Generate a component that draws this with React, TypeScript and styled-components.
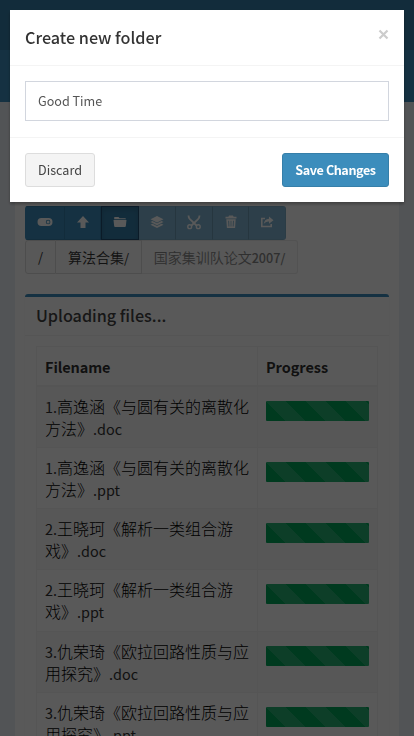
import React from "react";
import styled, { createGlobalStyle, css } from "styled-components";

const Global = createGlobalStyle`
  *, *::before, *::after { box-sizing: border-box; }
  html, body { margin: 0; height: 736px; overflow: hidden; background: #ecf0f5; }
  body { font-family: "Noto Sans CJK SC", "Liberation Sans", sans-serif; color: #333; font-size: 14px; }
`;

const Page = styled.div`
  height: 736px;
  overflow: hidden;
  display: flex;
  flex-direction: column;
`;
const LogoBar = styled.header`
  flex: 0 0 50px;
  background: #367fa9;
`;
const NavBar = styled.nav`
  flex: 0 0 52px;
  background: #3c8dbc;
`;
const Content = styled.main`
  flex: 1;
  min-height: 0;
  padding: 0 15px;
`;
const Panel = styled.section`
  height: 100%;
  padding: 104px 10px 0;
  background: #fff;
`;
const Toolbar = styled.div`
  display: flex;
  height: 34px;
  width: 261px;
  border-radius: 3px;
  overflow: hidden;
`;
const Tool = styled.button<{ $w: number; $active?: boolean; $disabled?: boolean }>`
  width: ${(p) => p.$w}px;
  flex: none;
  padding: 0 0 2px;
  display: flex;
  align-items: center;
  justify-content: center;
  border: 1px solid #367fa9;
  border-left-width: 0;
  background: #3c8dbc;
  color: #fff;
  ${(p) => p.$active && css`background: #367fa9; border: 1px solid #204d74; box-shadow: inset 0 3px 5px rgba(0, 0, 0, 0.125);`}
  ${(p) => p.$disabled && css`opacity: 0.65; border-right-color: #1f6690;`}
  &:last-child { border-right-color: #367fa9; }
`;
const Crumbs = styled.div`
  display: flex;
  width: 273px;
  height: 34px;
`;
const Crumb = styled.div<{ $w: number; $tone?: "plain" | "muted" }>`
  width: ${(p) => p.$w}px;
  flex: none;
  display: flex;
  align-items: center;
  justify-content: center;
  white-space: nowrap;
  border: 1px solid #ddd;
  border-left-width: ${(p) => (p.$tone ? 0 : 1)}px;
  border-radius: ${(p) => (p.$tone === "muted" ? "0 3px 3px 0" : p.$tone ? "0" : "3px 0 0 3px")};
  background: #fbfbfb;
  padding-bottom: 1px;
  color: ${(p) => (p.$tone === "muted" ? "#888" : "#333")};
  ${(p) => p.$tone === "muted" && css`border-color: #eaeaea;`}
`;
const CrumbText = styled.span`
  font-weight: 350;
`;
const Box = styled.section`
  margin-top: 20px;
  border-top: 3px solid #3c8dbc;
  border-radius: 3px;
  box-shadow: 0 1px 1px rgba(0, 0, 0, 0.1);
`;
const BoxHeader = styled.div`
  height: 39px;
  padding: 0 0 2px 11px;
  border-bottom: 1px solid #f4f4f4;
  display: flex;
  align-items: center;
  color: #444;
`;
const BoxBody = styled.div`
  padding: 10px 11px;
`;
const Table = styled.div`
  border: 1px solid #f4f4f4;
`;
const Row = styled.div<{ $head?: boolean; $odd?: boolean }>`
  display: grid;
  grid-template-columns: 220px 1fr;
  height: ${(p) => (p.$head ? 40 : 61.15)}px;
  border-bottom: ${(p) => (p.$head ? 2 : 1)}px solid #f4f4f4;
  background: ${(p) => (p.$odd ? "#f9f9f9" : "#fff")};
`;
const Cell = styled.div`
  padding: 8px 8px 0;
  font-size: 16px;
  font-weight: 300;
  line-height: 22px;
  white-space: nowrap;
  color: #000;
`;
const ProgressCell = styled.div`
  padding: 14px 8px 0;
  border-left: 1px solid #f4f4f4;
`;
const HeadCell = styled(Cell)<{ $divided?: boolean }>`
  color: #333;
  ${(p) => p.$divided && css`border-left: 1px solid #f4f4f4;`}
`;
const Bar = styled.div`
  height: 20px;
  border-radius: 1px;
  background-color: #00a65a;
  background-image: linear-gradient(45deg, rgba(255, 255, 255, 0.15) 25%, transparent 25%, transparent 50%, rgba(255, 255, 255, 0.15) 50%, rgba(255, 255, 255, 0.15) 75%, transparent 75%);
  background-size: 40px 40px;
`;
const weights = { semi: 500, bold: 700 };
const Latin = styled.span<{ $size: number; $weight?: "semi" | "bold"; $track?: number }>`
  font-size: ${(p) => p.$size}px;
  font-weight: ${(p) => (p.$weight ? weights[p.$weight] : 400)};
  letter-spacing: ${(p) => p.$track ?? 0}px;
  line-height: 1;
`;
const FileLatin = styled(Latin)`
  color: #333;
`;

const Backdrop = styled.div`
  position: fixed;
  inset: 0;
  background: rgba(0, 0, 0, 0.65);
  padding: 10px;
`;
const Dialog = styled.div`
  height: 192px;
  background: #fff;
  box-shadow: 0 2px 3px rgba(0, 0, 0, 0.3);
`;
const DialogHeader = styled.div`
  height: 56px;
  padding: 0 15px;
  border-bottom: 1px solid #f4f4f4;
  display: flex;
  align-items: center;
  justify-content: space-between;
  color: #333;
`;
const Close = styled.button`
  border: 0;
  background: none;
  padding: 0;
  width: 11px;
  height: 11px;
  margin-top: -6px;
  color: #ccc;
  display: flex;
`;
const DialogBody = styled.div`
  height: 72px;
  padding: 15px;
  border-bottom: 1px solid #f4f4f4;
`;
const Field = styled.div`
  height: 40px;
  padding: 0 12px;
  border: 1px solid #d2d6de;
  display: flex;
  align-items: center;
  color: #555;
`;
const DialogFooter = styled.div`
  padding: 15px;
  display: flex;
  justify-content: space-between;
`;
const Action = styled.button<{ $primary?: boolean }>`
  width: ${(p) => (p.$primary ? 107 : 70)}px;
  height: 34px;
  padding: 0;
  display: flex;
  align-items: center;
  justify-content: center;
  white-space: nowrap;
  font-family: inherit;
  border-radius: 3px;
  border: 1px solid ${(p) => (p.$primary ? "#367fa9" : "#ddd")};
  background: ${(p) => (p.$primary ? "#3c8dbc" : "#f4f4f4")};
  color: ${(p) => (p.$primary ? "#fff" : "#444")};
`;

const Svg = ({ children }: { children: React.ReactNode }) => (
  <svg width="16" height="16" viewBox="0 0 16 16" fill="currentColor">{children}</svg>
);
const icons = {
  toggle: <Svg><path fillRule="evenodd" d="M4.500 4h7a4 4 0 0 1 0 8h-7a4 4 0 0 1 0-8zm6.600 1.700a2.300 2.300 0 1 0 0 4.600 2.300 2.300 0 0 0 0-4.600zm0 .8a1.500 1.500 0 1 1 0 3 1.500 1.500 0 0 1 0-3z" /></Svg>,
  up: <Svg><path d="M8 2l6 6.500h-3.500V14h-5V8.500H2z" /></Svg>,
  folder: <Svg><path d="M2.500 3h4l1.200 1.300h5.300q1 0 1 1H2.200V3.500zM1.500 6h13l-.7 6.200q-.1.800-1 .8H3.200q-.9 0-1-.8z" /></Svg>,
  layers: <Svg><path d="M8 2l6.500 3.200L8 8.400 1.500 5.200zM1.500 8l2-1L8 9.300 12.500 7l2 1L8 11.200zM1.500 10.800l2-1L8 12.100l4.500-2.300 2 1L8 14z" /></Svg>,
  cut: <Svg><path d="M2.500 1.500c0 1.800.6 2.900 1.400 3.700L10.500 11.500M13.500 1.500c0 1.800-.6 2.900-1.400 3.700L5.500 11.500" fill="none" stroke="currentColor" strokeWidth="1.800" /><g fill="none" stroke="currentColor" strokeWidth="1.400"><circle cx="3.700" cy="12.700" r="1.900" /><circle cx="12.300" cy="12.700" r="1.900" /></g></Svg>,
  trash: <Svg><path fillRule="evenodd" d="M6 1.500h4l.6 1.300H13.500v1.700h-11V2.800h2.900zM3.300 5.300h9.400l-.6 8.700H3.900zm1.900 1.500.3 5.700h.9l-.3-5.700zm2.400 0v5.700h.8V6.800zm2.400 0-.3 5.700h.9l.3-5.700z" /></Svg>,
  share: <Svg><path d="M6 4.500H2.800v8h9.400V10" fill="none" stroke="currentColor" strokeWidth="1.600" /><path d="M10 2.500l4.500 3.700L10 9.800V7.600C7.500 7.500 6 8.500 4.800 10 5 6.800 6.800 4.900 10 4.700z" /></Svg>,
};

const tools: { w: number; icon: React.ReactNode; active?: boolean; disabled?: boolean }[] = [
  { w: 40, icon: icons.toggle },
  { w: 36, icon: icons.up },
  { w: 38, icon: icons.folder, active: true },
  { w: 37, icon: icons.layers, disabled: true },
  { w: 37, icon: icons.cut, disabled: true },
  { w: 36, icon: icons.trash, disabled: true },
  { w: 37, icon: icons.share, disabled: true },
];

const files = [
  ["1.", "高逸涵《与圆有关的离散化", "方法》", ".doc"],
  ["1.", "高逸涵《与圆有关的离散化", "方法》", ".ppt"],
  ["2.", "王晓珂《解析一类组合游", "戏》", ".doc"],
  ["2.", "王晓珂《解析一类组合游", "戏》", ".ppt"],
  ["3.", "仇荣琦《欧拉回路性质与应", "用探究》", ".doc"],
  ["3.", "仇荣琦《欧拉回路性质与应", "用探究》", ".ppt"],
];

export default function App() {
  return (
    <>
      <Global />
      <Page>
        <LogoBar />
        <NavBar />
        <Content>
          <Panel>
            <Toolbar>
              {tools.map((t, i) => (
                <Tool key={i} $w={t.w} $active={t.active} $disabled={t.disabled}>{t.icon}</Tool>
              ))}
            </Toolbar>
            <Crumbs>
              <Crumb $w={31}><Latin $size={13}>/</Latin></Crumb>
              <Crumb $w={86} $tone="plain"><CrumbText>算法合集<Latin $size={13}>/</Latin></CrumbText></Crumb>
              <Crumb $w={156} $tone="muted"><CrumbText>国家集训队论文<Latin $size={12.6} $weight="semi">2007/</Latin></CrumbText></Crumb>
            </Crumbs>
            <Box>
              <BoxHeader><Latin $size={16.2} $weight="semi">Uploading files...</Latin></BoxHeader>
              <BoxBody>
                <Table>
                  <Row $head>
                    <HeadCell><Latin $size={14.5} $weight="bold" $track={-0.1}>Filename</Latin></HeadCell>
                    <HeadCell $divided><Latin $size={14.5} $weight="bold" $track={-0.05}>Progress</Latin></HeadCell>
                  </Row>
                  {files.map(([num, first, second, ext], i) => (
                    <Row key={i} $odd={i % 2 === 0}>
                      <Cell>
                        <FileLatin $size={14.4}>{num}</FileLatin>{first}<br />
                        {second}<FileLatin $size={14.4}>{ext}</FileLatin>
                      </Cell>
                      <ProgressCell><Bar /></ProgressCell>
                    </Row>
                  ))}
                </Table>
              </BoxBody>
            </Box>
          </Panel>
        </Content>
      </Page>
      <Backdrop>
        <Dialog role="dialog">
          <DialogHeader>
            <Latin $size={16.2} $weight="semi">Create new folder</Latin>
            <Close aria-label="Close">
              <svg width="11" height="11" viewBox="0 0 11 11"><path d="M1.500 1.500l8 8M9.500 1.500l-8 8" stroke="currentColor" strokeWidth="2.200" /></svg>
            </Close>
          </DialogHeader>
          <DialogBody><Field><Latin $size={12.6}>Good Time</Latin></Field></DialogBody>
          <DialogFooter>
            <Action><Latin $size={12.6}>Discard</Latin></Action>
            <Action $primary><Latin $size={12.6} $weight="bold" $track={-0.42}>Save Changes</Latin></Action>
          </DialogFooter>
        </Dialog>
      </Backdrop>
    </>
  );
}
